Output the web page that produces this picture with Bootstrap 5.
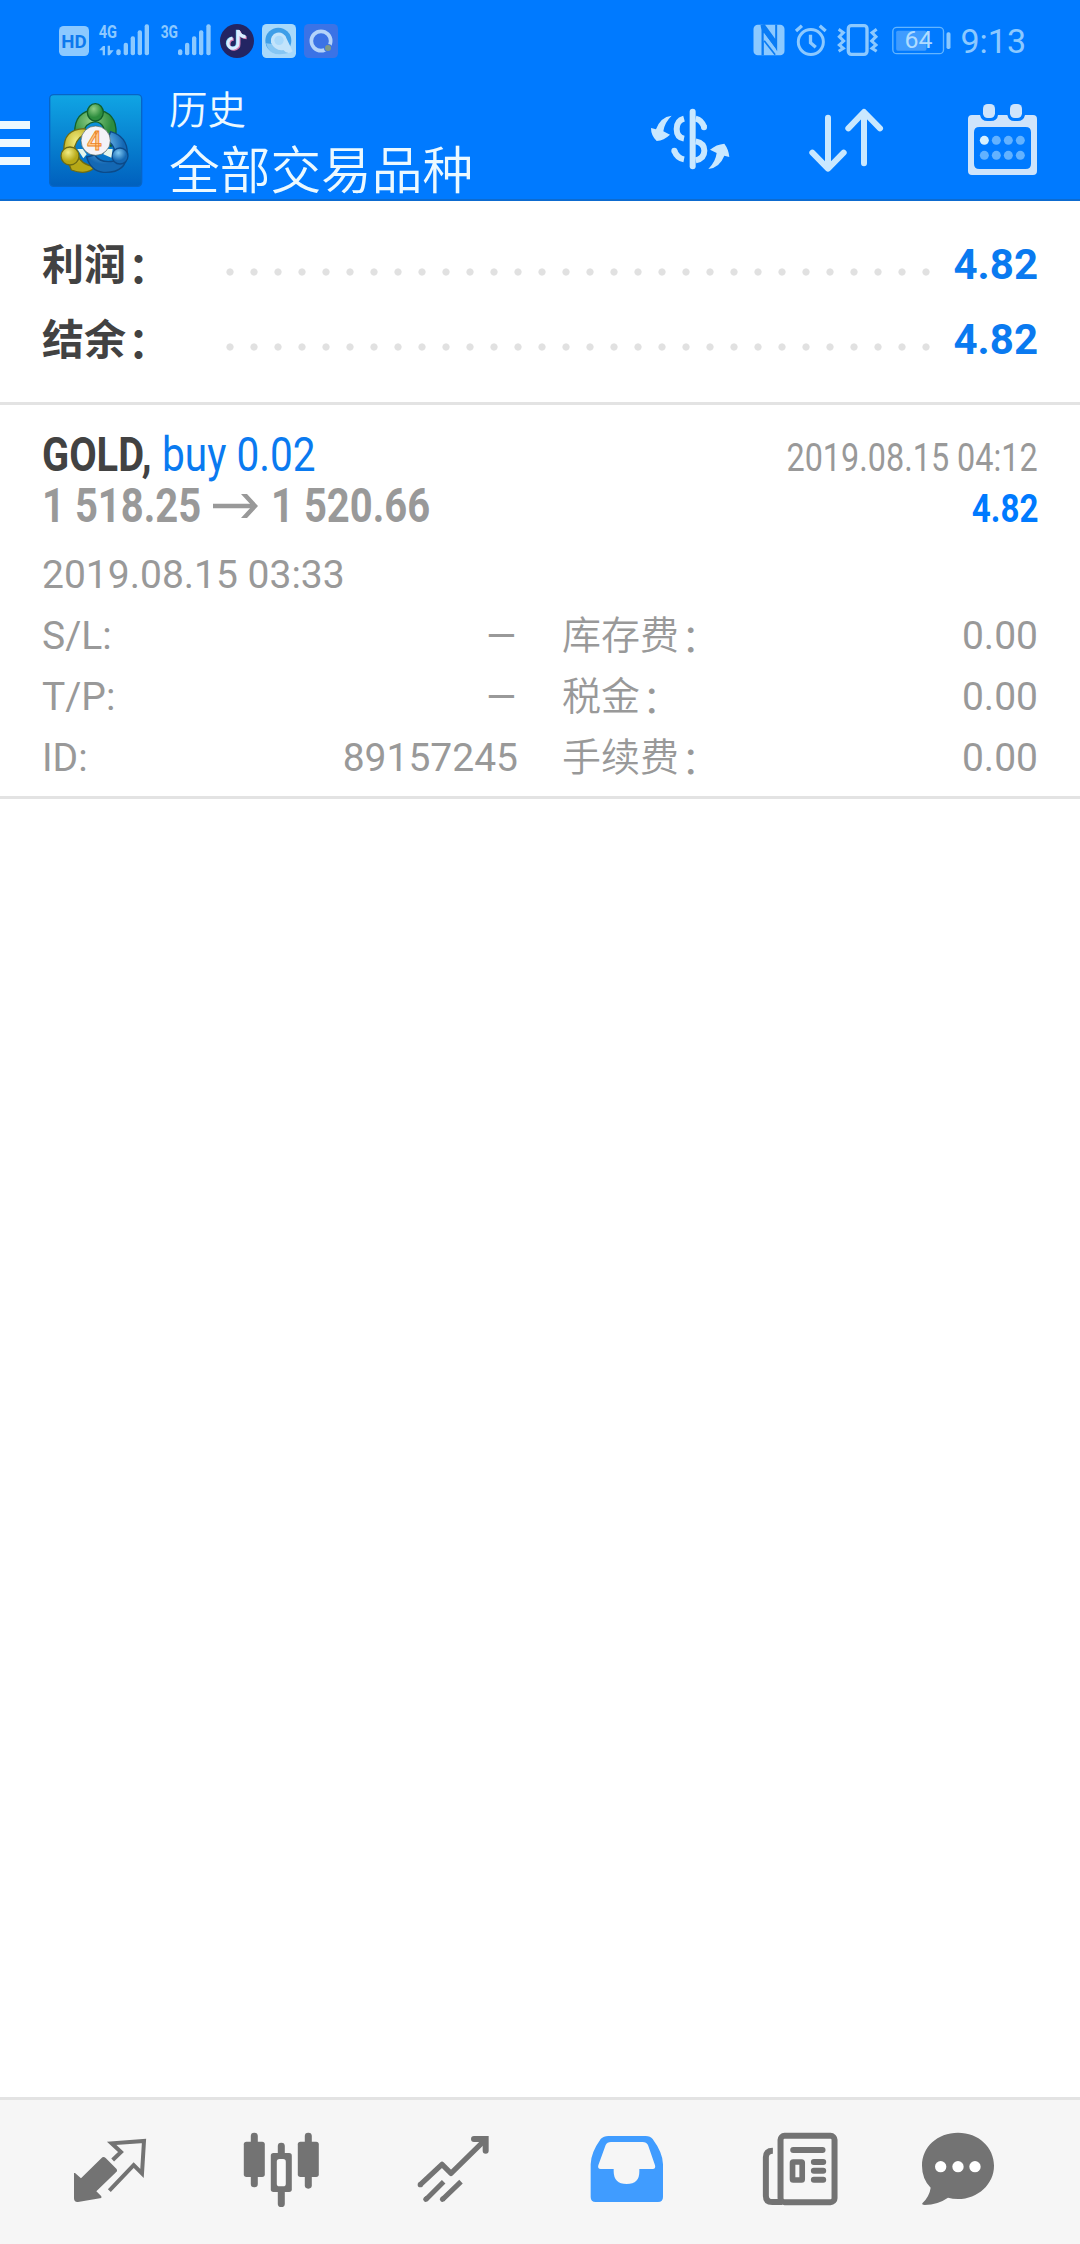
<!DOCTYPE html>
<html lang="zh-CN">
<head>
<meta charset="utf-8">
<meta name="viewport" content="width=device-width, initial-scale=1">
<title>历史</title>
<link rel="stylesheet" href="https://cdn.jsdelivr.net/npm/bootstrap@5.3.0/dist/css/bootstrap.min.css">
<style>
body{font-family:Roboto,"Noto Sans CJK SC",sans-serif;background:#fff;color:#999}
svg{display:block;flex:none;overflow:visible}
.screen{width:1080px;height:2244px;overflow:hidden}
.top-area{background:#007aff;height:201px;border-bottom:2px solid #0d6bd0}
.status{height:80px;padding:2px 54px 0 59px;color:#8cc9ff}
.clock{font-size:34px;line-height:40px;margin-left:9px}
.appbar{height:119px}
.burger{width:30px;height:44px;margin-top:41px}
.burger i{height:8px;background:#ecf8ff}
.titles{color:#ecf9ff;font-family:"Noto Sans CJK SC",sans-serif;font-weight:350;padding-top:7px}
.t-one{font-size:38.5px;line-height:40px;margin-bottom:10px}
.t-two{font-size:50.7px;line-height:60px}
.tools{gap:76px;padding:20px 38px 0 0}
.summary{height:204px;padding:26px 42px 0;border-bottom:3px solid #e3e3e3}
.sum-row{height:75px;font-size:42px;line-height:75px;font-weight:700}
.sum-label{width:176px;color:#424242;transform:translateY(1px)}
.colon{display:inline-block;transform:translate(2px,3px)}
.dots{width:720px;height:8px;margin-top:15px;background:radial-gradient(circle at 12px 4px,#e1e1e1 3.2px,transparent 4px) 0 0/24px 8px}
.blue{color:#0a7af0}
.trade{height:394px;padding:24px 42px 0;border-bottom:3px solid #e3e3e3;font-size:39px}
.headline{font-size:48px;height:51px;line-height:51px}
.small-r{font-size:39px}
.narrow{display:inline-block;transform-origin:0 50%;white-space:pre}
.narrow-r{display:inline-block;transform-origin:100% 50%;white-space:pre}
.detail{line-height:61px}
.detail-cols{column-gap:44px}
.cjk{font-weight:350}
.dash{display:inline-block;transform-origin:100% 50%;transform:translate(1px,0) scaleX(1.32)}
.tabs{height:147px;background:#f6f6f6;border-top:3px solid #e3e3e3;padding:28px 69px 0 70px;color:#737373}
</style>
<script src="https://cdn.jsdelivr.net/npm/bootstrap@5.3.0/dist/js/bootstrap.bundle.min.js"></script>
</head>
<body>
<div class="screen d-flex flex-column">
<header class="top-area">
  <div class="status d-flex align-items-center">
    <svg width="30" height="34" viewBox="57 42 90 102"><rect x="57" y="48" width="90" height="90" rx="14" fill="#8cc9ff"/><text x="102" y="113" font-size="56" font-weight="700" text-anchor="middle" textLength="76" lengthAdjust="spacingAndGlyphs" fill="#0d79ee">HD</text></svg>
    <svg style="margin-left:10px" width="50" height="34" viewBox="178 42 150 102" fill="currentColor"><text x="177" y="84" font-size="56" font-weight="700" textLength="55" lengthAdjust="spacingAndGlyphs">4G</text><path d="M178 121l12-13h6v28h-7v-15zM204 107h7v14h11l-12 15h-6z"/><rect x="230" y="118" width="13" height="18" rx="6"/><rect x="252" y="98" width="13" height="38" rx="6"/><rect x="273" y="79" width="13" height="57" rx="6"/><rect x="294" y="61" width="13" height="75" rx="6"/><rect x="315" y="43" width="13" height="93" rx="6"/></svg>
    <svg style="margin-left:12px" width="50" height="34" viewBox="363 42 150 102" fill="currentColor"><text x="362" y="84" font-size="56" font-weight="700" textLength="52" lengthAdjust="spacingAndGlyphs">3G</text><rect x="414" y="118" width="13" height="18" rx="6"/><rect x="435" y="98" width="13" height="38" rx="6"/><rect x="456" y="79" width="13" height="57" rx="6"/><rect x="477" y="61" width="13" height="75" rx="6"/><rect x="499" y="43" width="13" height="93" rx="6"/></svg>
    <svg style="margin-left:9px" width="34" height="34" viewBox="540 42 102 102"><circle cx="591" cy="93" r="51" fill="#232563"/><g fill="none" stroke-width="9"><path d="M594 60v39a15 15 0 1 1-16-14M595 62q4 18 22 18" stroke="#d77fb5" transform="translate(3 3)"/><path d="M594 60v39a15 15 0 1 1-16-14M595 62q4 18 22 18" stroke="#6fd3ee" transform="translate(-2 -1)"/><path d="M594 60v39a15 15 0 1 1-16-14M595 62q4 18 22 18" stroke="#dcecff"/></g></svg>
    <svg style="margin-left:8px" width="34" height="34" viewBox="666 42 102 102"><rect x="666" y="42" width="102" height="102" rx="14" fill="#a8d9fb"/><circle cx="715" cy="92" r="39" fill="#3d9ee8"/><path d="M678 100q8 34 42 33 32-2 36-12-20-16-78-21z" fill="#86c6f3"/><path d="M693 98a24 24 0 0 1 47-12l18 38q-14 12-28-4-24 4-37-22z" fill="#c3e4fb"/><circle cx="717" cy="91" r="14" fill="#a8d9fb"/></svg>
    <svg style="margin-left:8px" width="34" height="34" viewBox="792 42 102 102"><rect x="792" y="42" width="102" height="102" rx="14" fill="#3b73e6"/><circle cx="843" cy="93" r="29" fill="none" stroke="#b4d4fa" stroke-width="11"/><circle cx="864" cy="114" r="12" fill="#3b73e6"/><circle cx="864" cy="114" r="9" fill="#7f9a88"/></svg>
    <svg class="ms-auto" width="32" height="34" viewBox="42 42 95 102"><rect x="43" y="44" width="93" height="92" rx="13" fill="#8cc9ff"/><path d="M64 46l12-4 32 44V44h6v80l-6-10-34-46v68h-7V60z" fill="#0a7cf5"/><path d="M74 70l36 48v10l-36-34z" fill="#8cc9ff"/><path d="M75 92l33 42" stroke="#0a7cf5" stroke-width="5"/></svg>
    <svg style="margin-left:10px" width="31" height="34" viewBox="168 42 94 102" fill="none" stroke="currentColor" stroke-width="9"><circle cx="216" cy="96" r="38"/><path d="M215 74v24l16 14M171 63l18-16M243 47l18 16" stroke-width="10"/></svg>
    <svg style="margin-left:11px" width="41" height="34" viewBox="294 42 121 102" fill="none" stroke="currentColor" stroke-width="10"><rect x="327" y="47" width="56" height="86" rx="9"/><path d="M298 58l14 10-12 12 13 13-13 12 12 10-14 9M412 58l-14 10 12 12-13 13 13 12-12 10 14 9" stroke-width="9"/></svg>
    <svg style="margin-left:14px" width="59" height="34" viewBox="458 42 176 102"><rect x="460" y="52" width="152" height="79" rx="12" fill="none" stroke="#63b5ff" stroke-width="4"/><rect x="470" y="62" width="91" height="60" rx="5" fill="#409cff"/><rect x="621" y="67" width="12" height="50" rx="5" fill="#8cc9ff"/><text x="537" y="115" font-size="74" text-anchor="middle" textLength="84" lengthAdjust="spacingAndGlyphs" fill="#b0dcff">64</text></svg>
    <span class="clock">9:13</span>
  </div>
  <div class="appbar d-flex align-items-start">
    <div class="burger d-flex flex-column justify-content-between"><i></i><i></i><i></i></div>
    <svg style="margin:14px 0 0 19px" width="94" height="95" viewBox="27 29 282 285">
      <defs><linearGradient id="bg" x1="0" y1="0" x2="0" y2="1"><stop offset="0" stop-color="#10a5e4"/><stop offset="1" stop-color="#0060be"/></linearGradient>
      <radialGradient id="gr" cx=".4" cy=".3"><stop offset="0" stop-color="#8fce85"/><stop offset="1" stop-color="#2d8d3e"/></radialGradient>
      <radialGradient id="ye" cx=".4" cy=".3"><stop offset="0" stop-color="#f2ed83"/><stop offset="1" stop-color="#b7a817"/></radialGradient>
      <radialGradient id="bl" cx=".4" cy=".3"><stop offset="0" stop-color="#7fc9f3"/><stop offset="1" stop-color="#1468b4"/></radialGradient></defs>
      <rect x="29" y="31" width="276" height="275" rx="12" fill="url(#bg)" stroke="#0765c6" stroke-width="4"/>
      <g stroke-width="4">
      <path d="M104 148q-2-68 62-72 66 6 62 74-2 18-15 36l-20-24q6-45-27-50-33 6-34 32z" fill="url(#gr)" stroke="#12602b"/>
      <path d="M72 200q-4-66 62-67l14 12q-34 8-44 42l6 20q12 36 56 40-24 28-72 10z" fill="url(#ye)" stroke="#6d6b14"/>
      <path d="M212 142q50 14 50 66-4 60-72 56-38-4-50-46l24-6q18 26 58 18 12-40-20-62z" fill="url(#bl)" stroke="#0c4a89"/>
      <ellipse cx="166" cy="84" rx="24" ry="26" fill="url(#gr)" stroke="#12602b"/><circle cx="90" cy="215" r="27" fill="url(#ye)" stroke="#6d6b14"/><circle cx="240" cy="215" r="24" fill="url(#bl)" stroke="#0c4a89"/></g>
      <path d="M112 194h16l12 16-10 12zM218 194h-18l-10 16 24 10z" fill="#e3f6ec"/>
      <circle cx="167" cy="169" r="44" fill="#f3f3f8" stroke="#48605a" stroke-width="2"/><text x="163" y="196" font-size="78" font-weight="500" text-anchor="middle" fill="#ffc98a" stroke="#ed8428" stroke-width="2.500">4</text>
    </svg>
    <div class="titles" style="margin-left:26px"><div class="t-one">历史</div><div class="t-two">全部交易品种</div></div>
    <div class="tools d-flex ms-auto">
      <svg width="80" height="80" viewBox="60 60 240 240" fill="none" stroke="#c9e8ff" stroke-width="18"><path d="M188 95v164" stroke-linecap="round"/><path d="M162 116q-22 6-22 31t22 29M133 212q8 22 29 26"/><circle cx="133" cy="212" r="9" fill="#c9e8ff" stroke="none"/><path d="M197 116q18 4 26 26" /><circle cx="222" cy="142" r="9" fill="#c9e8ff" stroke="none"/><path d="M197 184q26 5 26 28t-26 29"/><path d="M125 107q-34 4-47 41l-15-4q0 23 17 39 22-2 40-19l-20-10q3-26 25-47zM235 267q34-4 48-40l15 4q-2-23-15-40-24 2-43 18l20 10q-3 26-25 48z" fill="#c9e8ff" stroke="none"/></svg>
      <svg width="80" height="80" viewBox="528 60 240 240" fill="none" stroke="#c9e8ff" stroke-width="18" stroke-linecap="round" stroke-linejoin="round"><path d="M594 113v152M547 218l47 48 47-48M702 250V98M655 145l47-49 48 49"/></svg>
      <svg width="80" height="80" viewBox="996 60 240 240"><path fill="#cfe4fb" fill-rule="evenodd" d="M1026 105h24q4 18 22 18h10q20 0 22-18h28q4 18 21 18h10q18 0 22-18h24q12 0 12 12v156q0 12-12 12h-183q-12 0-12-12V117q0-12 12-12zM1048 141q-16 0-16 16v94q0 16 16 16h139q16 0 16-16v-94q0-16-16-16z"/><rect x="1059" y="72" width="36" height="42" rx="14" fill="#cfe4fb"/><rect x="1140" y="72" width="36" height="42" rx="14" fill="#cfe4fb"/><g fill="#63b2ff"><circle cx="1063" cy="181" r="13.500" fill="#d8f1ff"/><circle cx="1099" cy="181" r="13.500"/><circle cx="1135" cy="181" r="13.500"/><circle cx="1171" cy="181" r="13.500"/><circle cx="1063" cy="226" r="13.500"/><circle cx="1099" cy="226" r="13.500"/><circle cx="1135" cy="226" r="13.500"/><circle cx="1171" cy="226" r="13.500"/></g></svg>
    </div>
  </div>
</header>
<section class="summary">
  <div class="sum-row d-flex align-items-center"><span class="sum-label">利润<span class="colon">：</span></span><span class="dots"></span><span class="blue ms-auto">4.82</span></div>
  <div class="sum-row d-flex align-items-center"><span class="sum-label">结余<span class="colon">：</span></span><span class="dots"></span><span class="blue ms-auto">4.82</span></div>
</section>
<section class="trade">
  <div class="headline d-flex align-items-baseline">
    <b class="narrow" style="width:120px;transform:scaleX(.83);color:#424242">GOLD,</b><span class="narrow blue" style="transform:scaleX(.845)">buy 0.02</span>
    <span class="narrow-r small-r ms-auto" style="transform:scaleX(.83)">2019.08.15 04:12</span>
  </div>
  <div class="headline d-flex align-items-baseline">
    <b class="narrow" style="width:171px;transform:scaleX(.833)">1 518.25</b><svg width="46" height="26" viewBox="0 0 46 26" fill="none" stroke="#999" stroke-width="4.500" style="transform:translateY(-3px)"><path d="M0 13h42"/><path d="M28 1h6l11 12-11 12h-6l11-12z" fill="#999" stroke="none"/></svg><b class="narrow" style="margin-left:12px;transform:scaleX(.833)">1 520.66</b>
    <b class="narrow-r small-r ms-auto" style="transform:scaleX(.85);color:#007aff">4.82</b>
  </div>
  <div class="detail" style="margin-top:14px">2019.08.15 03:33</div>
  <div class="detail detail-cols d-flex">
    <div class="flex-fill w-50"><div class="d-flex justify-content-between"><span>S/L:</span><span class="dash">–</span></div><div class="d-flex justify-content-between"><span>T/P:</span><span class="dash">–</span></div><div class="d-flex justify-content-between"><span>ID:</span><span>89157245</span></div></div>
    <div class="flex-fill w-50"><div class="d-flex justify-content-between"><span class="cjk">库存费<span class="colon">：</span></span><span>0.00</span></div><div class="d-flex justify-content-between"><span class="cjk">税金<span class="colon">：</span></span><span>0.00</span></div><div class="d-flex justify-content-between"><span class="cjk">手续费<span class="colon">：</span></span><span>0.00</span></div></div>
  </div>
</section>
<nav class="tabs d-flex justify-content-between mt-auto">
  <svg width="80" height="80" viewBox="90 144 240 240"><path d="M102 279l3 0 18 16 61-60q6-7 13-1l32 32q5 6-1 11l-59 57 15 15v5l-70 12q-12 1-12-11z" fill="currentColor"/><path d="M218 240l25-24-28-26 97-7-6 97-25-25-73 77" fill="none" stroke="currentColor" stroke-width="12"/></svg>
  <svg width="80" height="80" viewBox="606.600 144 240 240" fill="currentColor"><rect x="633" y="158" width="21" height="164" rx="10"/><rect x="612" y="185" width="63" height="106" rx="8"/><rect x="795" y="158" width="21" height="168" rx="10"/><rect x="774" y="185" width="63" height="106" rx="8"/><rect x="714" y="188" width="21" height="60" rx="10"/><rect x="714" y="320" width="21" height="61" rx="10"/><rect x="693" y="219" width="63" height="117" rx="8"/><rect x="711" y="237" width="27" height="82" rx="8" fill="#f9f9f9"/></svg>
  <svg width="80" height="80" viewBox="1123 144 240 240" fill="none" stroke="currentColor" stroke-width="15"><path d="M1142 314l65-61 27 27 100-98" stroke-width="16" stroke-linejoin="round"/><circle cx="1142" cy="314" r="8" fill="currentColor" stroke="none"/><path d="M1303 168h44v44q0 9-9 9t-9-9v-26h-26q-9 0-9-9t9-9z" fill="currentColor" stroke="none"/><path d="M1158 359l54-54M1208 359l56-54"/><path d="M1158 358l2-2M1208 358l2-2" stroke-linecap="round"/></svg>
  <svg width="80" height="80" viewBox="140 144 240 240"><path fill="#409cff" fill-rule="evenodd" d="M204 168h112q14 0 21 9 31 42 31 76v98q0 15-15 15H166q-15 0-15-15v-98q0-34 30-76 9-9 23-9zM212 186q-12 0-16 9l-22 61q-3 11 7 11h39v7q0 38 39 38t38-38v-7h40q10 0 7-11l-21-61q-5-9-16-9z"/></svg>
  <svg width="80" height="80" viewBox="656.400 144 240 240" fill="none" stroke="currentColor"><rect x="721" y="167.500" width="162" height="199" rx="12" stroke-width="18"/><path d="M698 212q-21 0-21 20v115q0 19 19 19h30" stroke-width="18"/><path d="M759 210h88M821 246h28M821 272h28M821 299h28" stroke-width="18" stroke-linecap="round"/><rect x="757" y="246" width="29" height="54" rx="2" stroke-width="17"/></svg>
  <svg width="80" height="80" viewBox="1173 144 240 240"><path fill="currentColor" d="M1254 158c62 0 108 44 108 99s-48 100-108 100q-16 0-30-4-30 21-70 22-9 0-7-5 22-22 25-47-26-26-26-66c0-56 46-99 108-99z"/><g fill="#fff"><circle cx="1202" cy="260" r="17"/><circle cx="1254" cy="260" r="17"/><circle cx="1305" cy="260" r="17"/></g></svg>
</nav>
</div>
</body>
</html>
